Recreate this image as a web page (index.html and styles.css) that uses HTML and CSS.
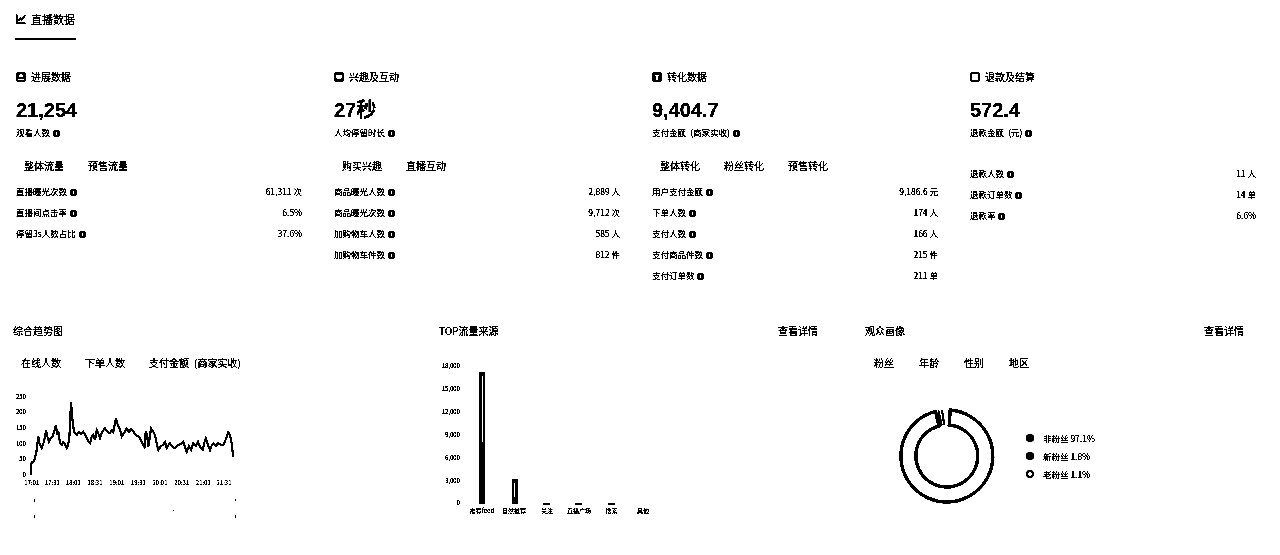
FILE: index.html
```html
<!DOCTYPE html>
<html lang="zh-CN">
<head>
    <meta charset="UTF-8">
    <title>直播数据</title>
    <link rel="stylesheet" href="styles.css">
</head>
<body>
<div class="page">
    <!-- Top tab -->
    <div class="tabbar">
        <div class="tabbar-item">
            <svg class="icon" viewBox="0 0 10 10"><path d="M0.7 0.5V9.3H9.5" fill="none" stroke="#000" stroke-width="1.4"/><path d="M2.4 7L4.4 4.4L5.8 5.8L9.2 1.4" fill="none" stroke="#000" stroke-width="1.4"/></svg>
            直播数据
        </div>
    </div>

    <!-- Four stat columns -->
    <div class="stats">
        <section class="stat">
            <h3 class="stat-title">
                <svg class="icon" viewBox="0 0 10 10"><rect x="0.2" y="0.2" width="9.6" height="9.6" rx="1.6"/><circle cx="5" cy="3.8" r="2" fill="#fff"/><rect x="2" y="6.4" width="6" height="1.4" fill="#fff"/></svg>
                进展数据
            </h3>
            <div class="stat-value">21,254</div>
            <div class="stat-label">观看人数 <i class="info"></i></div>
            <div class="tabs stat-tabs"><span>整体流量</span><span>预售流量</span></div>
            <div class="row"><span>直播曝光次数 <i class="info"></i></span><span>61,311 次</span></div>
            <div class="row"><span>直播间点击率 <i class="info"></i></span><span>6.5%</span></div>
            <div class="row"><span>停留3s人数占比 <i class="info"></i></span><span>37.6%</span></div>
        </section>

        <section class="stat">
            <h3 class="stat-title">
                <svg class="icon" viewBox="0 0 10 10"><rect x="0.2" y="0.2" width="9.6" height="9.6" rx="1.6"/><path d="M2 2.4H8V5.4L5 8L2 5.4Z" fill="#fff"/></svg>
                兴趣及互动
            </h3>
            <div class="stat-value">27秒</div>
            <div class="stat-label">人均停留时长 <i class="info"></i></div>
            <div class="tabs stat-tabs"><span>购买兴趣</span><span>直播互动</span></div>
            <div class="row"><span>商品曝光人数 <i class="info"></i></span><span>2,889 人</span></div>
            <div class="row"><span>商品曝光次数 <i class="info"></i></span><span>9,712 次</span></div>
            <div class="row"><span>加购物车人数 <i class="info"></i></span><span>585 人</span></div>
            <div class="row"><span>加购物车件数 <i class="info"></i></span><span>812 件</span></div>
        </section>

        <section class="stat">
            <h3 class="stat-title">
                <svg class="icon" viewBox="0 0 10 10"><rect x="0.2" y="0.2" width="9.6" height="9.6" rx="1.6"/><path d="M2 2.4H8L6 5.2V8H4V5.2Z" fill="#fff"/></svg>
                转化数据
            </h3>
            <div class="stat-value">9,404.7</div>
            <div class="stat-label">支付金额&ensp;(商家实收) <i class="info"></i></div>
            <div class="tabs stat-tabs"><span>整体转化</span><span>粉丝转化</span><span>预售转化</span></div>
            <div class="row"><span>用户支付金额 <i class="info"></i></span><span>9,186.6 元</span></div>
            <div class="row"><span>下单人数 <i class="info"></i></span><span>174 人</span></div>
            <div class="row"><span>支付人数 <i class="info"></i></span><span>166 人</span></div>
            <div class="row"><span>支付商品件数 <i class="info"></i></span><span>215 件</span></div>
            <div class="row"><span>支付订单数 <i class="info"></i></span><span>211 单</span></div>
        </section>

        <section class="stat">
            <h3 class="stat-title">
                <svg class="icon" viewBox="0 0 10 10"><rect x="1" y="1" width="8" height="8" rx="2" fill="#fff" stroke="#000" stroke-width="1.8"/></svg>
                退款及结算
            </h3>
            <div class="stat-value">572.4</div>
            <div class="stat-label">退款金额&ensp;(元) <i class="info"></i></div>
            <div class="no-tabs"></div>
            <div class="row"><span>退款人数 <i class="info"></i></span><span>11 人</span></div>
            <div class="row"><span>退款订单数 <i class="info"></i></span><span>14 单</span></div>
            <div class="row"><span>退款率 <i class="info"></i></span><span>6.6%</span></div>
        </section>
    </div>

    <!-- Charts -->
    <div class="charts">
        <section class="chart">
            <div class="chart-head"><h3>综合趋势图</h3></div>
            <div class="tabs chart-tabs"><span>在线人数</span><span>下单人数</span><span>支付金额&ensp;(商家实收)</span></div>
            <svg class="trend" width="240" height="140" viewBox="0 0 240 140">
                <g class="axis">
                    <text x="13" y="14" text-anchor="end">250</text>
                    <text x="13" y="29" text-anchor="end">200</text>
                    <text x="13" y="45" text-anchor="end">150</text>
                    <text x="13" y="61" text-anchor="end">100</text>
                    <text x="13" y="76" text-anchor="end">50</text>
                    <text x="13" y="92" text-anchor="end">0</text>
                    <text x="18.7" y="100" text-anchor="middle">17:01</text>
                    <text x="39.3" y="100" text-anchor="middle">17:31</text>
                    <text x="60.3" y="100" text-anchor="middle">18:01</text>
                    <text x="82" y="100" text-anchor="middle">18:31</text>
                    <text x="103.7" y="100" text-anchor="middle">19:01</text>
                    <text x="125.3" y="100" text-anchor="middle">19:31</text>
                    <text x="147" y="100" text-anchor="middle">20:01</text>
                    <text x="168.7" y="100" text-anchor="middle">20:31</text>
                    <text x="190.3" y="100" text-anchor="middle">21:01</text>
                    <text x="211" y="100" text-anchor="middle">21:31</text>
                </g>
                <polyline fill="none" stroke="#000" stroke-width="1.8" points="17.7,90 18,82 18.7,76.7 20.5,77 22,73.3 23.5,66 25.3,51.7 26.5,58 28.7,63.3 30.5,58 32,52 33,45 34.5,52 36,56.7 37.5,53 39.7,51.7 41,47 43,40 44.2,50 45.3,46 47,58.3 48.7,60 50.3,57.3 52,59 53.7,63.3 55,60 56.3,53.3 57.2,35 58,16.7 59,30 59.7,36.7 61,47 63.7,50 66,47 68,49 70.3,46.7 73,51 75,56 77,58.3 78.5,52 80.3,50 82,55 83.7,45 85.5,49 87,53.3 89,47 92,43.3 94.5,47 97,48.3 98.5,45 100.3,47 103,33.3 105,41 107,44 108.7,51.7 111,48 113.7,43.3 116,47 118,44 120.3,46.7 123,50 126,52 128,55 130.3,60 131.5,62 132.7,46.7 134,50 135.3,61.7 136.8,52 138,43.3 140,46 142,50 144,60 145.3,65 148,61 150,60 152,56.7 153.7,63.3 155.5,60 157,58.3 159.5,62 162,63.3 165,60 168,59 170.3,56.7 172,62 173.7,66.7 176,61 178,65 180.3,58.3 183,61 185,57 187,61.7 189.7,65 191.2,58 192.7,53.3 195,60 197,65 198.5,61 200.3,58.3 203,61 205,58 208,60 210.3,60 212.5,55 215.3,47.3 217,50 218.7,58.3 219.5,66 220.3,71.7"/>
                <rect x="21" y="114" width="1" height="3"/>
                <rect x="21" y="130" width="1" height="3"/>
                <rect x="222" y="114" width="1" height="2"/>
                <rect x="222" y="130" width="1" height="3"/>
                <rect x="160" y="125" width="1" height="1"/>
            </svg>
        </section>

        <section class="chart">
            <div class="chart-head"><h3>TOP流量来源</h3><a class="more">查看详情</a></div>
            <svg class="bars" width="379" height="165" viewBox="0 0 379 165">
                <g class="axis">
                    <text x="21" y="12" text-anchor="end">18,000</text>
                    <text x="21" y="35" text-anchor="end">15,000</text>
                    <text x="21" y="58" text-anchor="end">12,000</text>
                    <text x="21" y="81" text-anchor="end">9,000</text>
                    <text x="21" y="104" text-anchor="end">6,000</text>
                    <text x="21" y="127" text-anchor="end">3,000</text>
                    <text x="21" y="149" text-anchor="end">0</text>
                    <text x="43" y="157" text-anchor="middle">推荐feed</text>
                    <text x="75" y="157" text-anchor="middle">自然推荐</text>
                    <text x="108" y="157" text-anchor="middle">关注</text>
                    <text x="140" y="157" text-anchor="middle">直播广场</text>
                    <text x="172.6" y="157" text-anchor="middle">搜索</text>
                    <text x="204" y="157" text-anchor="middle">其他</text>
                </g>
                <rect x="40" y="16" width="6" height="132"/>
                <rect x="43" y="20" width="1" height="66" fill="#fff"/>
                <rect x="73" y="123" width="6" height="25"/>
                <rect x="75" y="127" width="1" height="14" fill="#fff"/>
                <rect x="104" y="147" width="7" height="2"/>
                <rect x="136" y="147" width="7" height="2"/>
                <rect x="169" y="147" width="7" height="2"/>
            </svg>
        </section>

        <section class="chart">
            <div class="chart-head"><h3>观众画像</h3><a class="more">查看详情</a></div>
            <div class="tabs chart-tabs tabs-wide"><span>粉丝</span><span>年龄</span><span>性别</span><span>地区</span></div>
            <div class="donut-wrap">
                <svg class="donut" width="100" height="100" viewBox="0 0 100 100">
                    <path d="M53.2 4.1A46 46 0 1 1 38.5 5.4L42 20A31 31 0 1 0 52.2 19.1Z" fill="#fff" stroke="#000" stroke-width="3"/>
                    <path d="M41.6 4.6L44.6 19.4" stroke="#000" stroke-width="1.8"/>
                    <path d="M45 4.2L47.2 19" stroke="#000" stroke-width="1.8"/>
                </svg>
                <ul class="legend">
                    <li><i class="dot"></i>非粉丝 97.1%</li>
                    <li><i class="dot"></i>新粉丝 1.8%</li>
                    <li><i class="dot dot-open"></i>老粉丝 1.1%</li>
                </ul>
            </div>
        </section>
    </div>
</div>
</body>
</html>
```

FILE: styles.css
```css
html {
    background: #fff;
}
body {
    margin: 0;
    font-family: "Noto Sans CJK SC", "Noto Sans", sans-serif;
    color: #000;
}
/* The reference is a hard black and white picture */
.page {
    height: 555px;
    overflow: hidden;
    background: #fff;
    filter: grayscale(1) brightness(0.72) contrast(30);
}
h3 {
    margin: 0;
    font-weight: 400;
    font-size: 10px;
    line-height: 14px;
}
.icon {
    width: 10px;
    height: 10px;
    flex: none;
}
/* Top tab */
.tabbar {
    height: 40px;
    padding-left: 15px;
}
.tabbar-item {
    display: flex;
    align-items: center;
    gap: 5px;
    box-sizing: border-box;
    width: 61px;
    height: 40px;
    padding-left: 1px;
    border-bottom: 2px solid #000;
    font-size: 11px;
}
/* Stat columns */
.stats {
    display: grid;
    grid-template-columns: repeat(4, 286px);
    gap: 32px;
    padding: 30px 0 0 16px;
}
.stat-title {
    display: flex;
    align-items: center;
    gap: 5px;
}
.stat-value {
    margin-top: 12px;
    font-family: "Liberation Sans", "Noto Sans CJK SC", sans-serif;
    font-size: 20px;
    line-height: 28px;
    font-weight: 700;
}
.stat-label {
    margin-top: 2px;
    font-size: 8.5px;
    line-height: 12px;
}
.tabs {
    display: flex;
    gap: 24px;
    padding-left: 8px;
    font-size: 10px;
    line-height: 14px;
}
.stat-tabs {
    margin-top: 21px;
    margin-bottom: 8px;
}
.no-tabs {
    height: 25px;
}
.row {
    display: flex;
    justify-content: space-between;
    font-size: 8.5px;
    line-height: 21px;
}
/* Round info mark with a white stem */
.info {
    display: inline-block;
    position: relative;
    width: 7px;
    height: 7px;
    margin-left: 1px;
    border-radius: 50%;
    background: #000;
    vertical-align: -1px;
}
.info::after {
    content: "";
    position: absolute;
    left: 3px;
    top: 2px;
    width: 1px;
    height: 3px;
    background: #fff;
}
/* Chart row */
.charts {
    display: grid;
    grid-template-columns: repeat(3, 379px);
    gap: 47px;
    margin-top: 38px;
    padding-left: 13px;
}
.chart-head {
    display: flex;
    justify-content: space-between;
}
.more {
    font-size: 10px;
    line-height: 14px;
}
.chart-tabs {
    margin-top: 18px;
}
.tabs-wide {
    gap: 25px;
    padding-left: 9px;
}
svg {
    display: block;
}
.axis text {
    font-size: 6px;
}
.trend {
    margin-top: 15px;
}
.bars {
    margin-top: 18px;
}
.donut-wrap {
    display: flex;
    align-items: center;
    margin: 36px 0 0 32px;
}
.legend {
    margin: 0 0 0 29px;
    padding: 0;
    list-style: none;
    font-size: 8.5px;
    line-height: 18px;
}
.legend li {
    display: flex;
    align-items: center;
}
.dot {
    box-sizing: border-box;
    width: 8px;
    height: 8px;
    margin-right: 9px;
    border-radius: 50%;
    background: #000;
}
.dot-open {
    background: #fff;
    border: 2px solid #000;
}
```
